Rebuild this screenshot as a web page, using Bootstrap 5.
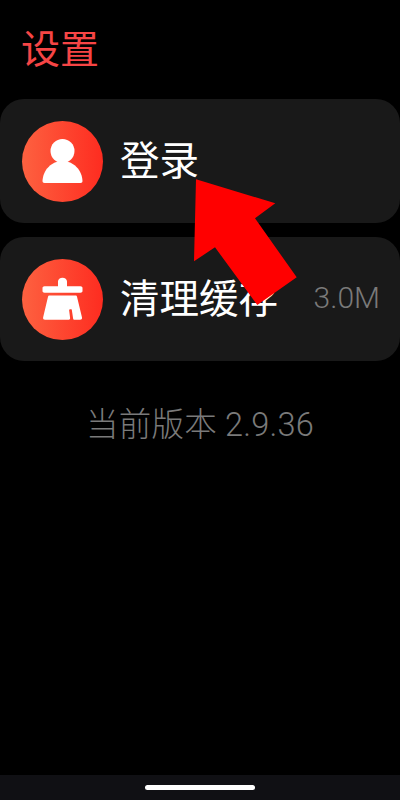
<!DOCTYPE html>
<html lang="zh">
<head>
<meta charset="utf-8">
<meta name="viewport" content="width=device-width, initial-scale=1">
<link href="https://cdn.jsdelivr.net/npm/bootstrap@5.3.0/dist/css/bootstrap.min.css" rel="stylesheet">
<style>
html,body{height:800px;overflow:hidden;background:#000;}
body{font-family:"Noto Sans CJK SC","Noto Sans",sans-serif;}
.screen{height:800px;position:relative;background:#000;}
.page-title{color:#f64545;font-size:39px;line-height:48px;padding:22px 0 0 21px;margin:0 0 27px;font-weight:400;height:72px;}
.set-list{gap:14px;}
.set-row{height:124px;background:#191919;border-radius:24px;padding:0 20px 0 22px;}
.round-ico{width:81px;height:81px;border-radius:50%;background:linear-gradient(90deg,#fd6140,#fe2c20);flex:none;}
.row-label{color:#fff;font-size:39.500px;line-height:50px;margin:-7px 0 0 17px;}
.row-size{color:#7a7a7a;font-size:30px;font-family:Roboto,"Noto Sans",sans-serif;font-weight:300;line-height:40px;margin-bottom:2px;}
.version-line{color:#7a7a7a;font-size:32.500px;letter-spacing:.2px;line-height:44px;margin-top:42px;font-family:Roboto,"Noto Sans CJK SC",sans-serif;font-weight:300;}
.home-bar{height:25px;background:#101014;}
.home-pill{width:110px;height:5px;background:#fff;border-radius:3px;}
.pointer-arrow{position:absolute;left:0;top:0;pointer-events:none;}
</style>
</head>
<body>
<div class="screen d-flex flex-column">
  <h1 class="page-title">设置</h1>
  <div class="set-list d-flex flex-column">
    <div class="set-row d-flex align-items-center">
      <div class="round-ico d-flex align-items-center justify-content-center">
        <svg width="81" height="81" viewBox="0 0 81 81"><circle cx="40.500" cy="30" r="12" fill="#fff"/><path d="M22.500 62c-1.300 0-2-.7-2-2C21 49 29.500 40 40.500 40S60 49 60.500 60c0 1.300-.7 2-2 2z" fill="#fff"/></svg>
      </div>
      <div class="row-label">登录</div>
    </div>
    <div class="set-row d-flex align-items-center">
      <div class="round-ico d-flex align-items-center justify-content-center">
        <svg width="81" height="81" viewBox="0 0 81 81"><path d="M36 22.500c0-2.200 2-3.800 4.500-3.800s4.500 1.600 4.500 3.800v4.800H58.500c1.200 0 2 .8 2 1.600v3.200c0 1-.8 1.600-2 1.600h-36c-1.200 0-2-.6-2-1.600v-3.200c0-.8.800-1.600 2-1.600H36z" fill="#fff"/><path d="M27.500 36.500h26c.8 0 1.400.5 1.500 1.300l5 20.600c.2 1.300-.6 2.300-1.900 2.300H52.500c-.8 0-1.300-.5-1.400-1.300L49.800 50.800c-.2-.8-2.800-.6-2.700.3l1 8c.1.900-.4 1.600-1.300 1.600H23c-1.300 0-2.100-1-1.900-2.300l4.900-20.600c.2-.8.700-1.300 1.500-1.300z" fill="#fff"/></svg>
      </div>
      <div class="row-label">清理缓存</div>
      <div class="row-size ms-auto">3.0M</div>
    </div>
  </div>
  <div class="version-line text-center">当前版本 2.9.36</div>
  <div class="home-bar d-flex align-items-center justify-content-center mt-auto"><div class="home-pill"></div></div>
  <svg class="pointer-arrow" width="400" height="800" viewBox="0 0 400 800"><polygon points="196,179.300 275.300,203.300 255,218.300 296.700,277.300 257.300,305 215,247.300 194,261.300" fill="#f00"/></svg>
</div>
<script src="https://cdn.jsdelivr.net/npm/bootstrap@5.3.0/dist/js/bootstrap.bundle.min.js"></script>
</body>
</html>
